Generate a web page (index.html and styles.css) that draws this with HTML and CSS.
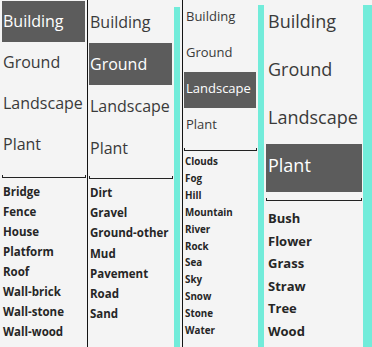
FILE: index.html
```html
<!DOCTYPE html>
<html lang="en">
<head>
<meta charset="utf-8">
<title>Categories</title>
<link rel="stylesheet" href="styles.css">
</head>
<body>
<div class="strip">
  <section class="panel p1">
    <ul class="menu">
      <li class="item selected">Building</li>
      <li class="item">Ground</li>
      <li class="item">Landscape</li>
      <li class="item">Plant</li>
    </ul>
    <div class="rule"></div>
    <ul class="list">
      <li>Bridge</li><li>Fence</li><li>House</li><li>Platform</li>
      <li>Roof</li><li>Wall-brick</li><li>Wall-stone</li><li>Wall-wood</li>
    </ul>
  </section>
  <div class="sep"></div>
  <section class="panel p2">
    <ul class="menu">
      <li class="item">Building</li>
      <li class="item selected">Ground</li>
      <li class="item">Landscape</li>
      <li class="item">Plant</li>
    </ul>
    <div class="rule"></div>
    <ul class="list">
      <li>Dirt</li><li>Gravel</li><li>Ground-other</li><li>Mud</li>
      <li>Pavement</li><li>Road</li><li>Sand</li>
    </ul>
  </section>
  <div class="teal t1"></div>
  <div class="gap"></div>
  <div class="sep"></div>
  <section class="panel p3">
    <ul class="menu">
      <li class="item">Building</li>
      <li class="item">Ground</li>
      <li class="item selected">Landscape</li>
      <li class="item">Plant</li>
    </ul>
    <div class="rule"></div>
    <ul class="list">
      <li>Clouds</li><li>Fog</li><li>Hill</li><li>Mountain</li><li>River</li>
      <li>Rock</li><li>Sea</li><li>Sky</li><li>Snow</li><li>Stone</li><li>Water</li>
    </ul>
  </section>
  <div class="teal t2"></div>
  <section class="panel p4">
    <ul class="menu">
      <li class="item">Building</li>
      <li class="item">Ground</li>
      <li class="item">Landscape</li>
      <li class="item selected">Plant</li>
    </ul>
    <div class="rule"></div>
    <ul class="list">
      <li>Bush</li><li>Flower</li><li>Grass</li><li>Straw</li><li>Tree</li><li>Wood</li>
    </ul>
  </section>
  <div class="teal t3"></div>
</div>
</body>
</html>
```

FILE: styles.css
```css
html, body {
  margin: 0;
  padding: 0;
  background: #f4f4f4;
}
body {
  font-family: "Open Sans", "Noto Sans", sans-serif;
  color: #363636;
}
.strip {
  display: flex;
  width: 372px;
  height: 347px;
  overflow: hidden;
}
.panel {
  display: flex;
  flex-direction: column;
  background: #f4f4f4;
  flex: none;
}
.sep {
  width: 1px;
  background: #141414;
  flex: none;
}
.gap {
  width: 2px;
  flex: none;
}
.teal {
  flex: none;
  background: #72ecda;
}
.t1 { width: 6px; margin-top: 7px; }
.t2 { width: 6px; margin-top: 5px; }
.t3 { width: 9px; margin-top: 5px; }

ul {
  list-style: none;
  margin: 0;
  padding: 0;
}
.item {
  white-space: nowrap;
  color: #3a3a3a;
}
.item.selected {
  background: #5c5c5c;
  color: #ffffff;
}
.rule {
  height: 2px;
  border: 1px solid #222;
  border-top: none;
}
.list li {
  font-weight: 700;
  color: #262626;
  white-space: nowrap;
}

/* panel 1 */
.p1 { width: 87px; padding-left: 2px; box-sizing: border-box; }
.p1 .menu { margin-top: 1px; width: 83px; }
.p1 .item { font-size: 16px; line-height: 41px; padding-left: 1px; }
.p1 .rule { margin-top: 10px; width: 82px; }
.p1 .list { padding-top: 4px; padding-left: 1px; }
.p1 .list li { font-size: 11.5px; line-height: 20px; }

/* panel 2 */
.p2 { width: 86px; padding-left: 1px; box-sizing: border-box; }
.p2 .menu { margin-top: 1px; width: 83px; }
.p2 .item { font-size: 16px; line-height: 42px; padding-left: 1px; }
.p2 .rule { margin-top: 7px; width: 82px; }
.p2 .list { padding-top: 4px; padding-left: 1px; }
.p2 .list li { font-size: 11.5px; line-height: 20.2px; }

/* panel 3 */
.p3 { width: 75px; padding-left: 1px; box-sizing: border-box; }
.p3 .menu { width: 72px; }
.p3 .item { font-size: 13px; line-height: 32px; padding: 0 0 4px 2px; }
.p3 .rule { margin-top: 4px; width: 71px; }
.p3 .list { padding-top: 3px; padding-left: 1px; }
.p3 .list li { font-size: 9.8px; line-height: 16.9px; }

/* panel 4 */
.p4 { width: 99px; padding-left: 2px; box-sizing: border-box; }
.p4 .menu { width: 96px; }
.p4 .item { font-size: 18px; line-height: 42px; padding: 0 0 6px 2px; }
.p4 .rule { margin-top: 6px; width: 94px; }
.p4 .list { padding-top: 6px; padding-left: 2px; }
.p4 .list li { font-size: 13px; line-height: 22.6px; }
```
